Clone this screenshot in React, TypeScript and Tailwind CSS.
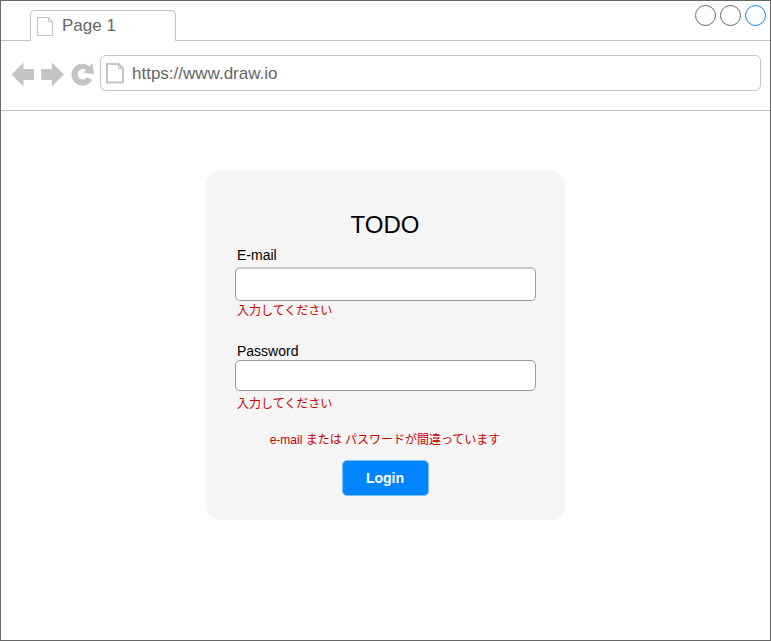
import React from "react";

function PageIcon({ thick = false }: { thick?: boolean }) {
  return thick ? (
    <svg className="block shrink-0" width="19" height="22" viewBox="0 0 19 22" fill="none" stroke="#c4c4c4">
      <path d="M2 2H13.5L18 6.5V20.5H2Z" strokeWidth="2" />
      <path d="M13.5 2V6.5H18" strokeWidth="1" />
    </svg>
  ) : (
    <svg className="block shrink-0" width="17" height="20" viewBox="0 0 17 20" fill="none" stroke="#c4c4c4">
      <path d="M0.5 0.5H11.5L15.5 4.5V18.5H0.5Z" />
      <path d="M11.5 0.5V4.5H15.5" />
    </svg>
  );
}

function TabStrip() {
  return (
    <div className="flex h-10 items-end">
      <div className="h-full w-[29px] border-b border-[#c4c4c4]" />
      <div className="flex h-[31px] w-[146px] rounded-t-[5px] border border-b-0 border-[#c4c4c4] pl-1.5 pt-1.5">
        <PageIcon />
        <span className="-mt-px ml-2 text-[17px] leading-[19px] text-[#666666]">Page 1</span>
      </div>
      <div className="flex h-full flex-1 justify-end gap-1 border-b border-[#c4c4c4] pr-1 pt-1">
        <span className="h-[21px] w-[21px] rounded-full border border-[#666666]" />
        <span className="h-[21px] w-[21px] rounded-full border border-[#666666]" />
        <span className="h-[21px] w-[21px] rounded-full border border-[#008cff]" />
      </div>
    </div>
  );
}

function Toolbar() {
  return (
    <div className="flex h-[70px] border-b border-[#c4c4c4] pr-[9px] pt-3.5">
      <svg className="block shrink-0" width="99" height="36" viewBox="1 55 99 36" fill="#c4c4c4">
        <path d="M11.5 74.5L23.5 62.5V69H34V80H23.5V86.5Z" />
        <path d="M63.8 74.5L51.8 62.5V69H41.2V80H51.8V86.5Z" />
        <path d="M92.4 63L94 74.2L83 72.4L86.3 70.1A5.3 5.3 0 1 0 87.3 77.2L92.2 79.8A11 11 0 1 1 89.6 66.3Z" />
      </svg>
      <div className="flex h-9 flex-1 rounded-[6px] border border-[#c4c4c4] pl-1 pt-1.5">
        <PageIcon thick />
        <span className="mt-[2px] ml-2 text-[17px] leading-[19px] text-[#666666]">https://www.draw.io</span>
      </div>
    </div>
  );
}

function LoginCard() {
  return (
    <form className="mt-[60px] flex h-[349px] w-[359px] flex-col rounded-[14px] bg-[#f5f5f5] px-[29px] pt-10 text-black" onSubmit={(e) => e.preventDefault()}>
      <h1 className="pr-px text-center text-[24px] leading-[28px]">TODO</h1>
      <label htmlFor="email" className="mt-2 pl-[2px] text-[14px] leading-4">E-mail</label>
      <input id="email" className="mt-1 h-[34px] w-[301px] rounded-[5px] border border-t-2 border-[#999999] border-t-[#c8c8c8] bg-white px-2 outline-none" />
      <p className="mt-[2px] pl-[2px] text-[12px] leading-4 text-[#cc0000]">入力してください</p>
      <label htmlFor="password" className="mt-6 pl-[2px] text-[14px] leading-4">Password</label>
      <input id="password" type="password" className="mt-px h-[31px] w-[301px] rounded-[5px] border border-[#999999] bg-white px-2 outline-none" />
      <p className="mt-[5px] pl-[2px] text-[12px] leading-4 text-[#cc0000]">入力してください</p>
      <p className="mt-5 pr-px text-center text-[12px] leading-4 text-[#cc0000]">e-mail または パスワードが間違っています</p>
      <div className="mt-3 flex justify-center pr-px">
        <button className="h-9 w-[87px] rounded-[5px] border border-[#7ac1fb] bg-[#0085ff] text-[14px] font-bold leading-4 text-white">Login</button>
      </div>
    </form>
  );
}

export default function App() {
  return (
    <div className="flex h-[641px] w-[771px] flex-col border border-[#666666] bg-white font-['Liberation_Sans','Noto_Sans_CJK_JP',sans-serif]">
      <TabStrip />
      <Toolbar />
      <main className="flex flex-1 justify-center">
        <LoginCard />
      </main>
    </div>
  );
}
